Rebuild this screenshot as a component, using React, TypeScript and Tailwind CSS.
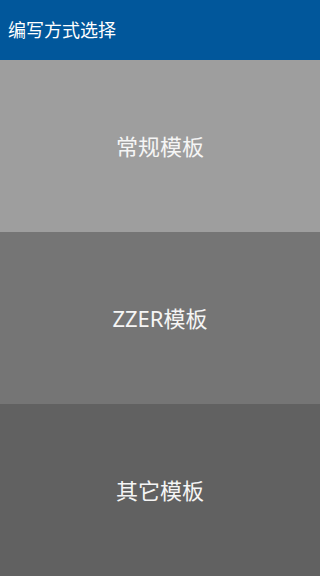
export default function App() {
  const items = [
    { label: '常规模板', bg: 'bg-[#9e9e9e]' },
    { label: 'ZZER模板', bg: 'bg-[#757575]' },
    { label: '其它模板', bg: 'bg-[#616161]' },
  ]

  return (
    <div
      className="flex h-[576px] w-[320px] flex-col"
      style={{ fontFamily: '"Noto Sans", "Noto Sans CJK SC", sans-serif' }}
    >
      <header className="flex h-[60px] items-center bg-[#01579b] px-2">
        <h1 className="text-[18px] text-white">编写方式选择</h1>
      </header>
      {items.map((item) => (
        <button
          key={item.label}
          className={`flex flex-1 items-center justify-center ${item.bg} text-[22px] text-[#f5f5f5]`}
        >
          {item.label}
        </button>
      ))}
    </div>
  )
}
